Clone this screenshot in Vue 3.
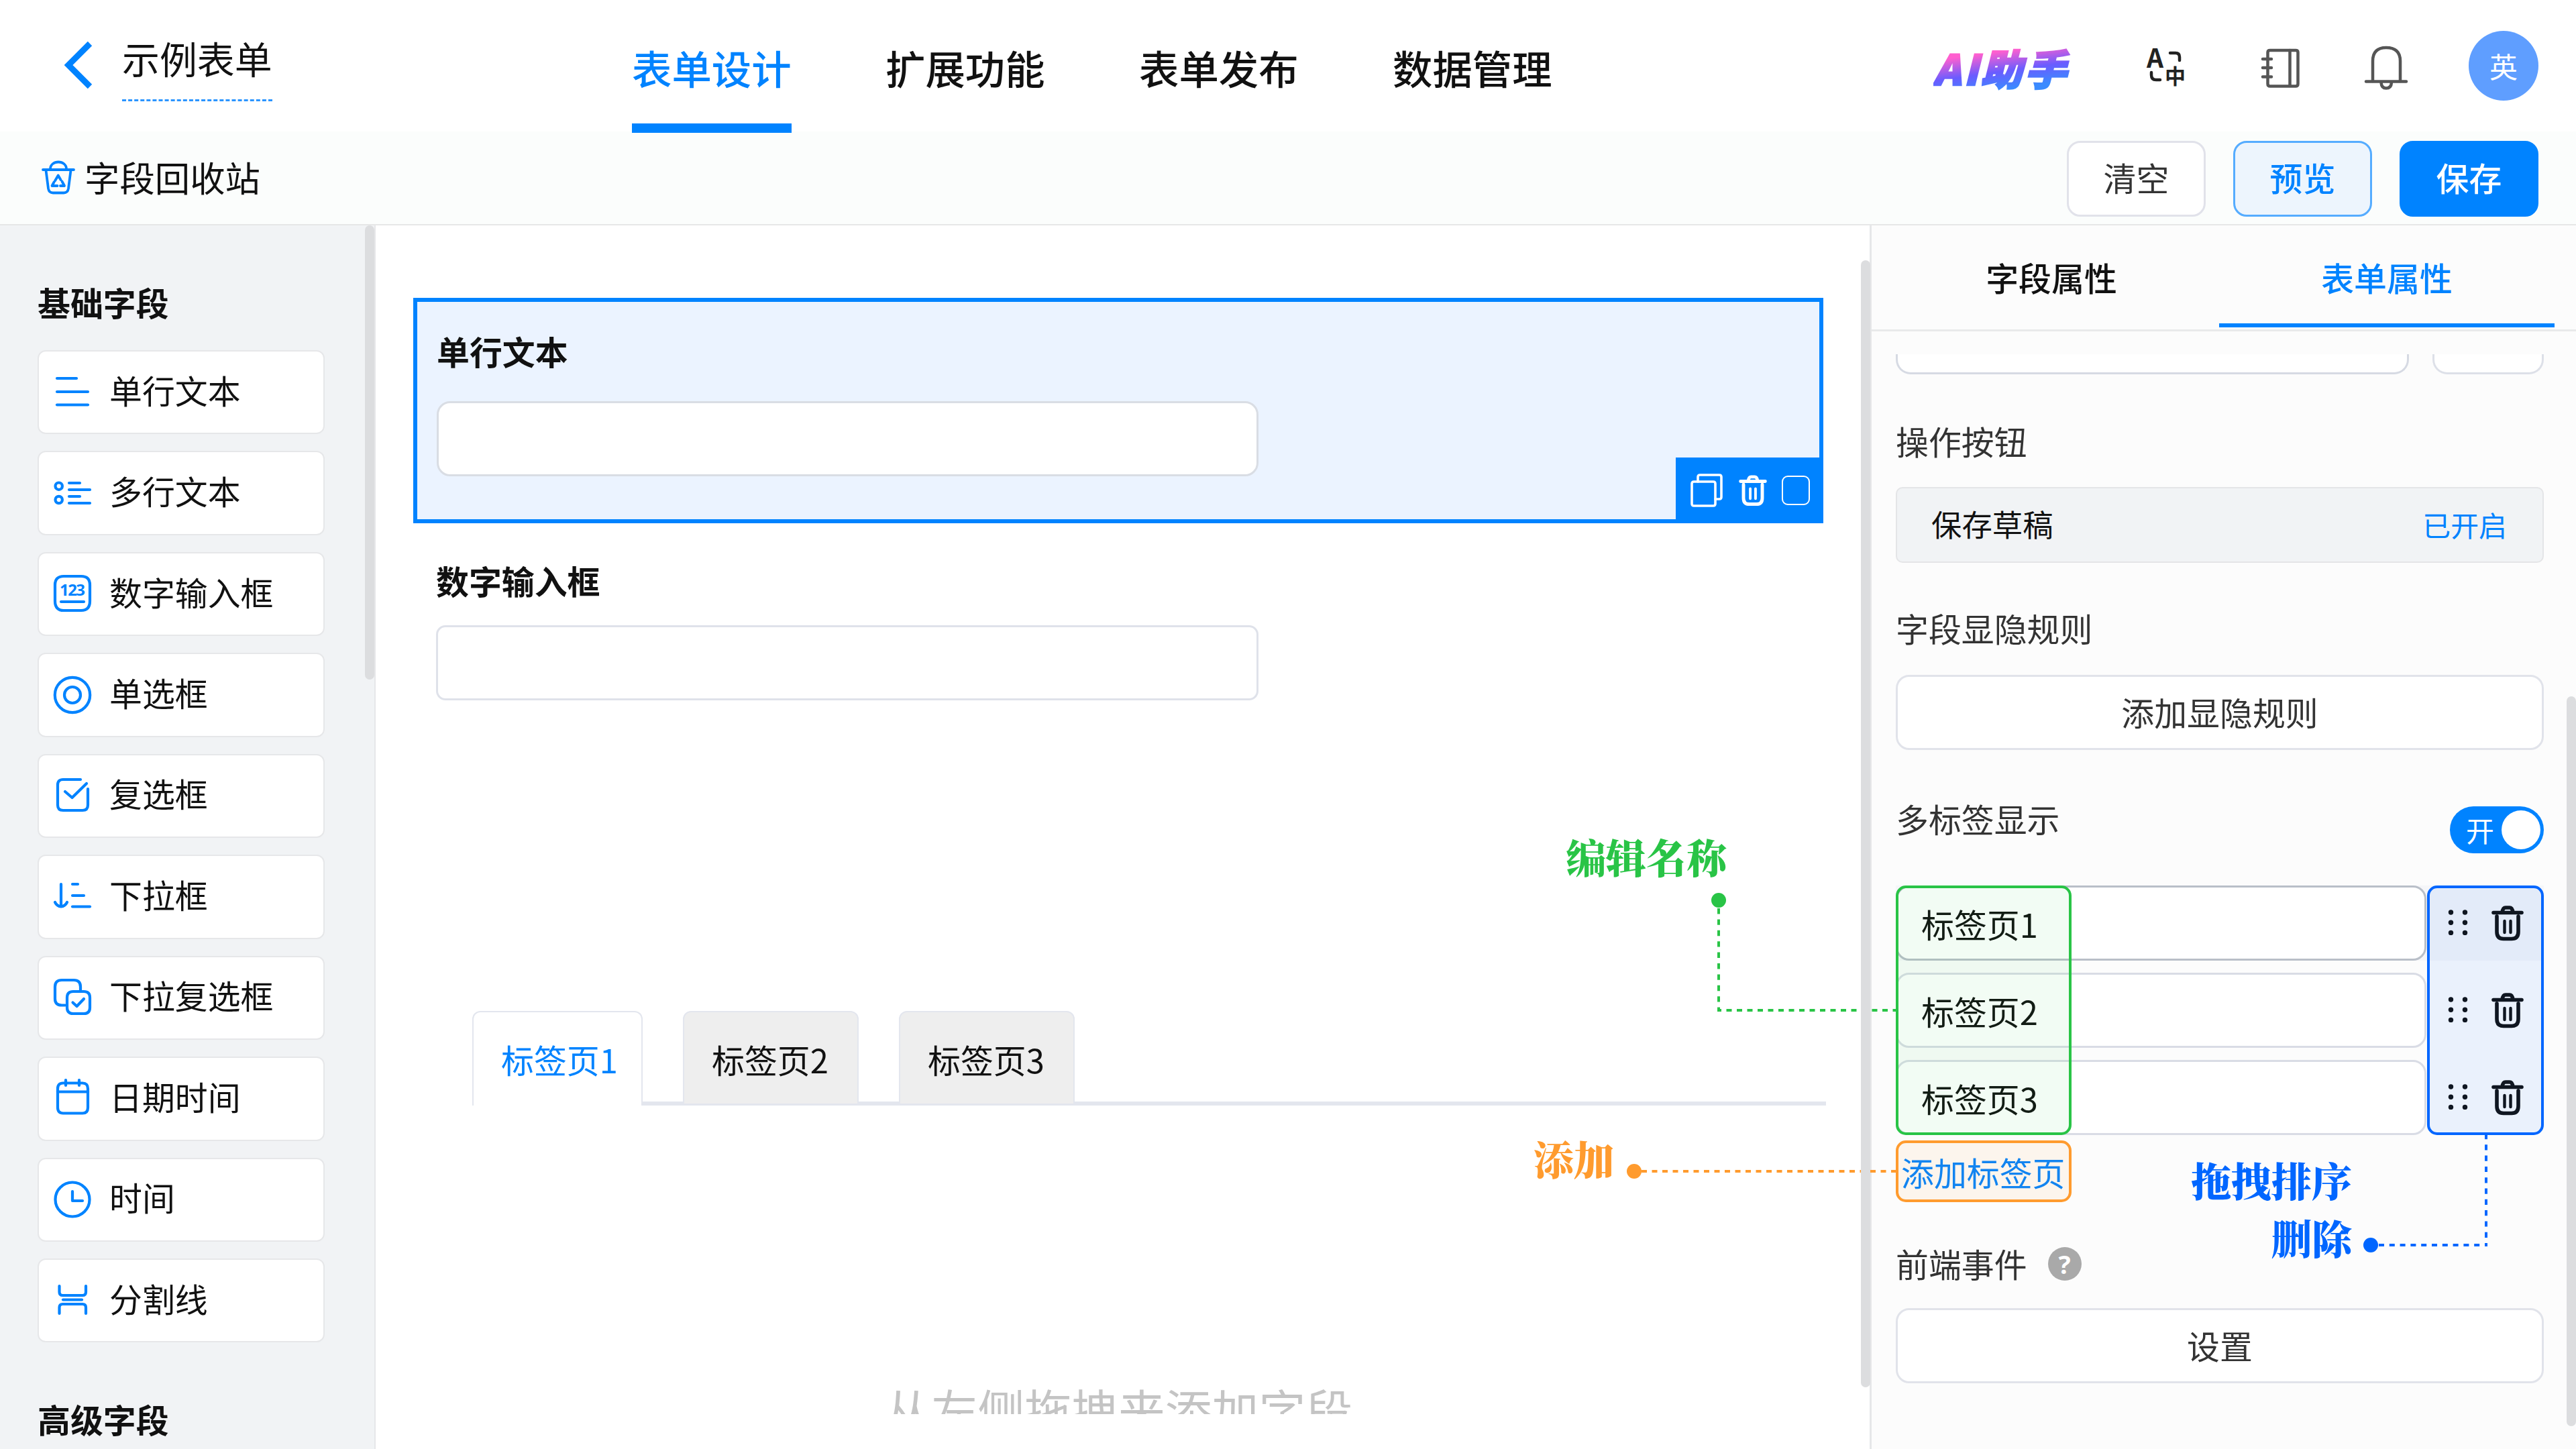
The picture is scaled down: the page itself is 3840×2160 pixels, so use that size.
<script setup>
import { ref } from 'vue'

const navs = ['表单设计', '扩展功能', '表单发布', '数据管理']
const activeNav = ref('表单设计')

const basicFields = [
  { name: '单行文本', paths: ['M5 8H34', 'M5 28H51', 'M5 47.5H51'] },
  {
    name: '多行文本',
    circles: [[7.7, 17.7, 5.2], [7.7, 38, 5.2]],
    paths: ['M23 13H39', 'M23 23H54', 'M23 33H39', 'M23 43H54'],
  },
  {
    name: '数字输入框',
    text: '123',
    paths: ['M15 2H41Q54 2 54 15V39Q54 53 41 53H15Q2 53 2 39V15Q2 2 15 2Z', 'M11 40H45'],
  },
  { name: '单选框', circles: [[28, 28, 26.2], [28, 28, 12]] },
  {
    name: '复选框',
    paths: ['M40 4H14Q6 4 6 12V42Q6 50 14 50H43Q51 50 51 42V18', 'M17 22L27.5 31L49 10'],
  },
  {
    name: '下拉框',
    paths: ['M11 10V43', 'M2 37Q5 43 11 43.5Q17 43 20 37', 'M28 10H36', 'M28 27H45', 'M28 43.5H54'],
  },
  {
    name: '下拉复选框',
    paths: [
      'M17 39.5H12Q2 39.5 2 30V12Q2 2 12 2H30Q40 2 40 12V17',
      'M29 19H45Q54 19 54 28V43Q54 52 45 52H29Q20 52 20 43V28Q20 19 29 19Z',
      'M28.5 35.5L34.5 41L45 30',
    ],
  },
  {
    name: '日期时间',
    paths: ['M14 5.5H43Q51 5.5 51 14V42Q51 50.5 43 50.5H14Q6 50.5 6 42V14Q6 5.5 14 5.5Z', 'M6 18.5H51', 'M18 1V9', 'M38 1V9'],
  },
  { name: '时间', circles: [[28, 28, 25.5]], paths: ['M28 16V30H43'] },
  {
    name: '分割线',
    paths: ['M8.5 7V16Q8.5 21 13.5 21H43Q48 21 48 16V7', 'M14 27.5H42', 'M8.5 48V39Q8.5 34 13.5 34H43Q48 34 48 39V48'],
  },
]

const tabs = ['标签页1', '标签页2', '标签页3']
const activeTab = ref('标签页1')
const panelTab = ref('表单属性')
</script>

<template>
  <div class="page">
    <header class="header">
      <svg class="back" viewBox="0 0 42 70"><path d="M38 3L6 35L38 67" /></svg>
      <div class="form-name">示例表单</div>
      <nav class="nav">
        <a
          v-for="n in navs" :key="n"
          class="nav-item"
          :class="{ active: n === activeNav }"
          @click="activeNav = n"
        >{{ n }}</a>
      </nav>
      <div class="header-right">
        <span class="ai">AI助手</span>
        <svg class="ic-lang" viewBox="0 0 56 56">
          <text x="0" y="29" class="lang-a">A</text>
          <text x="27" y="53" class="lang-z">中</text>
          <path d="M35 7H43Q49 7 49 13V18" />
          <path d="M7 36V40Q7 47 14 47H20" />
        </svg>
        <svg class="ic-book" viewBox="0 0 57 59">
          <path d="M13 3H51Q54.500 3 54.500 6V53Q54.500 56.500 51 56.500H13Q9.500 56.500 9.500 53V6Q9.500 3 13 3Z" />
          <path d="M42.500 3V56M2 16H15M2 29H15M2 42.500H15" />
        </svg>
        <svg class="ic-bell" viewBox="0 0 64 66">
          <path d="M12 53V23Q12 3 32 3Q53 3 53 23V53" />
          <path d="M2 53.500H62M24.500 55Q25 63.500 32 63.500Q39.500 63.500 40 55" />
        </svg>
        <span class="avatar">英</span>
      </div>
    </header>

    <div class="toolbar">
      <svg class="ic-recycle" viewBox="0 0 50 50">
        <path d="M2 13H48M13 12C13 -2 37 -2 37 12M6.500 14L10 41Q11 47.500 17 47.500H33Q39 47.500 40 41L43.500 14" />
        <path d="M20 29.500L24.700 21.500L28.500 28M30.500 30.500L34 37H28M23.500 37H15.500L18.500 31.500" />
      </svg>
      <span class="recycle-text">字段回收站</span>
      <button class="btn">清空</button>
      <button class="btn btn-plain">预览</button>
      <button class="btn btn-primary">保存</button>
    </div>

    <div class="body">
      <aside class="sidebar">
        <h3 class="group-title">基础字段</h3>
        <div class="field-list">
          <div v-for="f in basicFields" :key="f.name" class="field-card">
            <svg class="field-icon" viewBox="0 0 56 56">
              <circle v-for="(c, i) in f.circles" :key="'c' + i" :cx="c[0]" :cy="c[1]" :r="c[2]" />
              <path v-for="p in f.paths" :key="p" :d="p" />
              <text v-if="f.text" x="28" y="31" textLength="38">{{ f.text }}</text>
            </svg>
            <span>{{ f.name }}</span>
          </div>
        </div>
        <h3 class="group-title group-next">高级字段</h3>
        <i class="bar bar-side"></i>
      </aside>

      <main class="canvas">
        <div class="canvas-scroll">
          <div class="form-item selected">
            <label>单行文本</label>
            <div class="input"></div>
            <div class="item-actions">
              <svg class="act-copy" viewBox="0 0 48 50">
                <path d="M5 12H34Q37 12 37 15V45Q37 48 34 48H5Q2 48 2 45V15Q2 12 5 12Z" />
                <path d="M11 12V5Q11 2 14 2H43Q46 2 46 5V35Q46 38 43 38H37" />
              </svg>
              <svg class="act-trash" viewBox="0 0 48 52">
                <path d="M3 10.500H45M16 10Q17 3 21 3H27Q31 3 32 10M8 16V39Q8 49.500 18 49.500H30Q40 49.500 40 39V16" />
                <path class="thin" d="M19.500 23V40M28.500 23V40" />
              </svg>
              <span class="act-check"></span>
            </div>
          </div>
          <div class="form-item">
            <label>数字输入框</label>
            <div class="input"></div>
          </div>
          <div class="tabs">
            <div
              v-for="t in tabs" :key="t"
              class="tab"
              :class="{ active: t === activeTab }"
              @click="activeTab = t"
            >{{ t }}</div>
          </div>
          <p class="drop-tip">从左侧拖拽来添加字段</p>
        </div>
        <i class="bar bar-canvas"></i>
      </main>

      <section class="panel">
        <div class="panel-tabs">
          <div
            v-for="t in ['字段属性', '表单属性']" :key="t"
            class="panel-tab"
            :class="{ active: t === panelTab }"
            @click="panelTab = t"
          >{{ t }}</div>
        </div>
        <div class="panel-body">
          <div class="cut-row">
            <div class="cut cut-wide"></div>
            <div class="cut cut-small"></div>
          </div>

          <div class="label l-action">操作按钮</div>
          <div class="draft">
            <span>保存草稿</span>
            <a>已开启</a>
          </div>

          <div class="label l-rule">字段显隐规则</div>
          <div class="wide-btn">添加显隐规则</div>

          <div class="switch-row">
            <span class="label">多标签显示</span>
            <span class="switch">开<i></i></span>
          </div>

          <div class="tag-rows">
            <div v-for="(t, i) in tabs" :key="t" class="tag-row" :class="{ hover: i === 0 }">
              <div class="tag-input">{{ t }}</div>
              <svg class="drag" viewBox="0 0 30 40">
                <circle v-for="n in 6" :key="n" :cx="n % 2 ? 4.5 : 25.5" :cy="5 + Math.floor((n - 1) / 2) * 15.2" r="3.7" />
              </svg>
              <svg class="trash" viewBox="0 0 48 52">
                <path d="M3 10.500H45M16 10Q17 3 21 3H27Q31 3 32 10M8 16V39Q8 49.500 18 49.500H30Q40 49.500 40 39V16" />
                <path class="thin" d="M19.500 23V40M28.500 23V40" />
              </svg>
            </div>
          </div>
          <div class="add-tag">添加标签页</div>

          <div class="event-row">
            <span class="label">前端事件</span>
            <span class="help">?</span>
          </div>
          <div class="wide-btn">设置</div>
        </div>
        <i class="bar bar-panel"></i>
      </section>
    </div>

    <!-- 标注层 -->
    <div class="mark mark-green"></div>
    <div class="mark mark-blue"></div>
    <div class="mark mark-orange"></div>
    <svg class="mark-lines" viewBox="0 0 3840 2160">
      <g class="green">
        <circle cx="2562" cy="1342" r="11" />
        <path d="M2562 1354V1508" stroke-dasharray="8.400 8" />
        <path d="M2560 1506H2826" stroke-dasharray="8 7.500" stroke-dashoffset="2" />
      </g>
      <g class="orange">
        <circle cx="2436" cy="1746" r="11" />
        <path d="M2447 1746H2826" stroke-dasharray="8 7.500" />
      </g>
      <g class="blue">
        <circle cx="3534" cy="1856" r="11" />
        <path d="M3546 1856H3708" stroke-dasharray="8 7.800" />
        <path d="M3706 1690V1858" stroke-dasharray="8.200 8.100" />
      </g>
    </svg>
    <span class="note note-edit">编辑名称</span>
    <span class="note note-add">添加</span>
    <span class="note note-sort">拖拽排序<br>删除</span>
  </div>
</template>

<style>
html, body { margin: 0; background: #fff; overflow: hidden; }
</style>

<style scoped>
* { box-sizing: border-box; }
.page {
  position: relative;
  z-index: 0;
  width: 3840px;
  height: 2160px;
  overflow: hidden;
  display: flex;
  flex-direction: column;
  background: #fff;
  color: #111;
  font-family: "Noto Sans CJK SC", sans-serif;
  font-size: 48.9px;
  line-height: 70px;
}
svg { display: block; flex-shrink: 0; overflow: visible; fill: none; stroke-linecap: round; stroke-linejoin: round; }

/* Header */
.header { height: 196px; flex-shrink: 0; display: flex; align-items: flex-start; }
.back { width: 42px; height: 70px; margin: 62px 0 0 96px; stroke: #0083ff; stroke-width: 9; stroke-linecap: butt; stroke-linejoin: miter; }
.form-name { margin: 51px 0 0 44px; height: 100px; width: 224px; font-size: 55.9px; border-bottom: 3px dashed #2b95ff; white-space: nowrap; }
.nav { display: flex; gap: 140px; margin-left: 536px; }
.nav-item {
  width: 238px;
  height: 198px;
  padding-top: 65px;
  font-size: 59.4px;
  font-weight: 500;
  white-space: nowrap;
}
.nav-item.active { color: #0083ff; border-bottom: 14px solid #0083ff; }
.header-right { display: flex; align-items: flex-start; margin-left: auto; margin-right: 56px; }
.ai {
  width: 226px;
  margin-top: 65px;
  font-size: 62px;
  font-weight: 900;
  font-style: italic;
  letter-spacing: 4px;
  white-space: nowrap;
  background: linear-gradient(172deg, #ff5fcf 25%, #6a5cff 55%, #3a8bff 82%);
  -webkit-background-clip: text;
  background-clip: text;
  color: transparent;
  -webkit-text-stroke: 2.500px transparent;
}
.ic-lang { width: 56px; height: 56px; margin: 72px 0 0 92px; stroke: #222; stroke-width: 4.5; }
.ic-lang text { fill: #222; stroke: none; font-family: "Noto Sans CJK SC", sans-serif; font-weight: 700; }
.lang-a { font-size: 39px; }
.lang-z { font-size: 31px; }
.ic-book { width: 57px; height: 59px; margin: 72px 0 0 115px; stroke: #555; stroke-width: 4.5; }
.ic-bell { width: 64px; height: 66px; margin: 68px 0 0 97px; stroke: #555; stroke-width: 4.5; }
.avatar {
  width: 104px;
  height: 104px;
  margin: 46px 0 0 91px;
  border-radius: 50%;
  background: #5f9eff;
  color: #fff;
  font-size: 41.9px;
  line-height: 104px;
  text-align: center;
}

/* Toolbar */
.toolbar {
  height: 140px;
  flex-shrink: 0;
  display: flex;
  align-items: center;
  padding: 0 56px 0 62px;
  background: #fbfdfc;
  border-bottom: 2px solid #e6e7e7;
  z-index: -1;
}
.ic-recycle { width: 50px; height: 50px; stroke: #0083ff; stroke-width: 3.8; }
.recycle-text { margin-left: 14px; margin-right: auto; font-size: 52.4px; margin-top: -5px; }
.btn {
  width: 207px;
  height: 113px;
  margin-left: 41px;
  margin-top: 2px;
  padding: 0 0 6px;
  border: 3px solid #e1e2ea;
  border-radius: 20px;
  background: #fff;
  color: #333;
  font: 48.9px "Noto Sans CJK SC", sans-serif;
}
.btn-plain { color: #0083ff; background: #edf5fd; border-color: #55acff; font-weight: 500; }
.btn-primary { color: #fff; background: #0083ff; border-color: #0083ff; font-weight: 500; }

.body { flex: 1; display: flex; min-height: 0; }
.bar { position: absolute; width: 14px; border-radius: 7px; background: #dcdddf; }

/* Sidebar */
.sidebar { position: relative; width: 560px; flex-shrink: 0; padding: 78px 0 0 56px; background: #f1f3f5; border-right: 2px solid #e6e7e9; overflow: hidden; }
.group-title { margin: 0; font-size: 48.9px; font-weight: 700; line-height: 72px; }
.field-list { display: flex; flex-direction: column; gap: 25px; margin-top: 36px; }
.field-card {
  width: 428px;
  height: 125.450px;
  padding: 0 0 1px 22px;
  display: flex;
  align-items: center;
  gap: 27px;
  background: #fff;
  border: 2px solid #e6e7e9;
  border-radius: 12px;
}
.field-card span { margin-top: -7px; white-space: nowrap; }
.field-icon { width: 56px; height: 56px; stroke: #0083ff; stroke-width: 4.2; }
.field-icon text { fill: #0083ff; stroke: none; font: 700 24px "Noto Sans", sans-serif; text-anchor: middle; }
.group-next { margin-top: 78px; }
.bar-side { top: 0; right: 0; height: 677px; }

/* Canvas */
.canvas { position: relative; width: 2227px; flex-shrink: 0; padding: 108px 0 0 56px; }
.canvas-scroll { height: 1664px; width: 2110px; overflow: hidden; }
.form-item { position: relative; width: 2102px; height: 258px; padding: 49px 35px 0 34px; }
.form-item.selected { height: 336px; border: 6px solid #0083ff; background: #ebf3ff; padding: 37px 29px 0; }
.form-item label { display: block; font-weight: 700; line-height: 72px; }
.input { width: 1226px; height: 112px; margin-top: 31px; background: #fff; border: 3px solid #dfe2ea; border-radius: 14px; }
.selected .input { width: 1225px; margin-top: 39px; border-color: #d9dde4; border-radius: 20px; }
.item-actions {
  position: absolute;
  right: -6px;
  bottom: -6px;
  width: 220px;
  height: 98px;
  display: flex;
  align-items: center;
  padding-left: 22px;
  background: #0083ff;
}
.act-copy { width: 48px; height: 50px; stroke: #fff; stroke-width: 3.6; }
.act-trash { width: 42px; height: 48px; margin-left: 24px; stroke: #fff; stroke-width: 5.6; }
.thin { stroke-width: 4.4; }
.act-check { width: 42px; height: 44px; margin-left: 22px; border: 2.500px solid #fff; border-radius: 9px; }

.tabs {
  display: flex;
  gap: 60px;
  width: 2106px;
  height: 141px;
  margin-top: 469px;
  padding-left: 88px;
  background: linear-gradient(#e3e6ee, #e3e6ee) 88px 135px / 2018px 6px no-repeat;
}
.tab {
  width: 262px;
  height: 139px;
  padding: 35px 0 0 41px;
  white-space: nowrap;
  border: 2px solid #e3e6ee;
  border-bottom: 1px solid #e3e6ee;
  border-radius: 12px 12px 0 0;
  background: #eee;
  font-weight: 400;
}
.tab.active { width: 254px; height: 141px; color: #0083ff; background: #fff; border-bottom: 0; }
.drop-tip { margin: 402px 0 0; width: 2102px; text-align: center; color: #c4c4c4; font-size: 69.8px; line-height: 100px; }
.bar-canvas { top: 52px; right: -1px; height: 1680px; z-index: 1; }

/* Property panel */
.panel { position: relative; flex: 1; background: #fcfcfc; border-left: 3px solid #e6e7e9; }
.panel-tabs { height: 158px; display: flex; padding-left: 18px; border-bottom: 3px solid #e9eaeb; }
.panel-tab { width: 500px; height: 152px; padding-top: 42px; text-align: center; font-weight: 500; }
.panel-tab.active { color: #0083ff; border-bottom: 6px solid #0083ff; }
.panel-body { padding: 34px 48px 0 36px; }
.cut-row { display: flex; gap: 35px; }
.cut { height: 30px; background: #fff; border: 3px solid #dde0e8; border-top: 0; border-radius: 0 0 22px 22px; }
.cut-wide { width: 765px; border-color: #d6dae3; }
.cut-small { width: 166px; }
.label { color: #333; white-space: nowrap; }
.l-action { margin-top: 64px; }
.draft {
  display: flex;
  align-items: center;
  justify-content: space-between;
  height: 113px;
  margin-top: 34px;
  padding: 0 53px 6px 51px;
  background: #f1f3f5;
  border: 2px solid #e4e5e7;
  border-radius: 10px;
  font-size: 45.4px;
}
.draft a { color: #0083ff; font-size: 41.9px; padding-top: 4px; }
.l-rule { margin-top: 62px; }
.wide-btn {
  height: 112px;
  padding-top: 17px;
  margin-top: 35px;
  text-align: center;
  color: #333;
  background: #fff;
  border: 3px solid #e1e3ea;
  border-radius: 20px;
}
.switch-row { display: flex; justify-content: space-between; height: 118px; margin-top: 67px; }
.switch {
  display: flex;
  align-items: center;
  justify-content: space-between;
  width: 140px;
  height: 70px;
  margin-top: 17px;
  padding: 0 5px 0 24px;
  border-radius: 35px;
  background: #0083ff;
  color: #fff;
  font-size: 41.9px;
}
.switch i { width: 58px; height: 58px; border-radius: 50%; background: #fff; }
.tag-rows { display: flex; flex-direction: column; gap: 18px; margin-top: 17px; }
.tag-row { display: flex; align-items: center; height: 112px; }
.tag-row.hover { background: #f5f6f9; }
.tag-input {
  width: 791px;
  height: 112px;
  padding: 19px 0 0 35px;
  background: #fff;
  border: 3px solid #d9dce5;
  border-radius: 20px;
}
.hover .tag-input { border-color: #b9bfc8; }
.drag { width: 30px; height: 40px; margin: 0 0 2px 32px; fill: #111; }
.trash { width: 48px; height: 52px; margin-left: 35px; stroke: #111; stroke-width: 5.6; }
.add-tag { height: 92px; margin-top: 8px; padding: 12px 0 0 8px; color: #0083ff; }
.event-row { display: flex; align-items: center; margin-top: 56px; }
.event-row + .wide-btn { margin-top: 32px; }
.help {
  width: 50px;
  height: 50px;
  margin: 2px 0 0 31px;
  border-radius: 50%;
  background: #a9a9a9;
  color: #fff;
  font: 700 38px/50px "Noto Sans", sans-serif;
  text-align: center;
}
.bar-panel { top: 702px; right: 0; height: 1088px; }

/* Annotations */
.mark { position: absolute; border: 4px solid; border-radius: 15px; }
.mark-green { left: 2826px; top: 1320px; width: 262px; height: 372px; border-color: #29c446; background: rgba(41, 196, 70, 0.06); }
.mark-blue { left: 3618px; top: 1320px; width: 174px; height: 372px; border-color: #0066ff; background: rgba(0, 102, 255, 0.07); }
.mark-orange { left: 2826px; top: 1700px; width: 262px; height: 92px; border-color: #ff9b2e; background: rgba(255, 155, 46, 0.07); }
.mark-lines { position: absolute; left: 0; top: 0; width: 3840px; height: 2160px; stroke-width: 4; stroke-linecap: butt; pointer-events: none; }
.mark-lines circle { stroke: none; }
.green { stroke: #29c446; fill: #29c446; }
.orange { stroke: #ff9b2e; fill: #ff9b2e; }
.blue { stroke: #0066ff; fill: #0066ff; }
.note { position: absolute; font: 900 60px/86px "Noto Serif CJK SC", "Source Han Serif SC", "Noto Sans CJK SC", serif; white-space: nowrap; text-align: right; }
.note-edit { left: 2334px; top: 1233px; color: #29c446; }
.note-add { left: 2286px; top: 1683px; color: #ff9b2e; }
.note-sort { left: 3266px; top: 1715px; color: #0066ff; }
</style>
